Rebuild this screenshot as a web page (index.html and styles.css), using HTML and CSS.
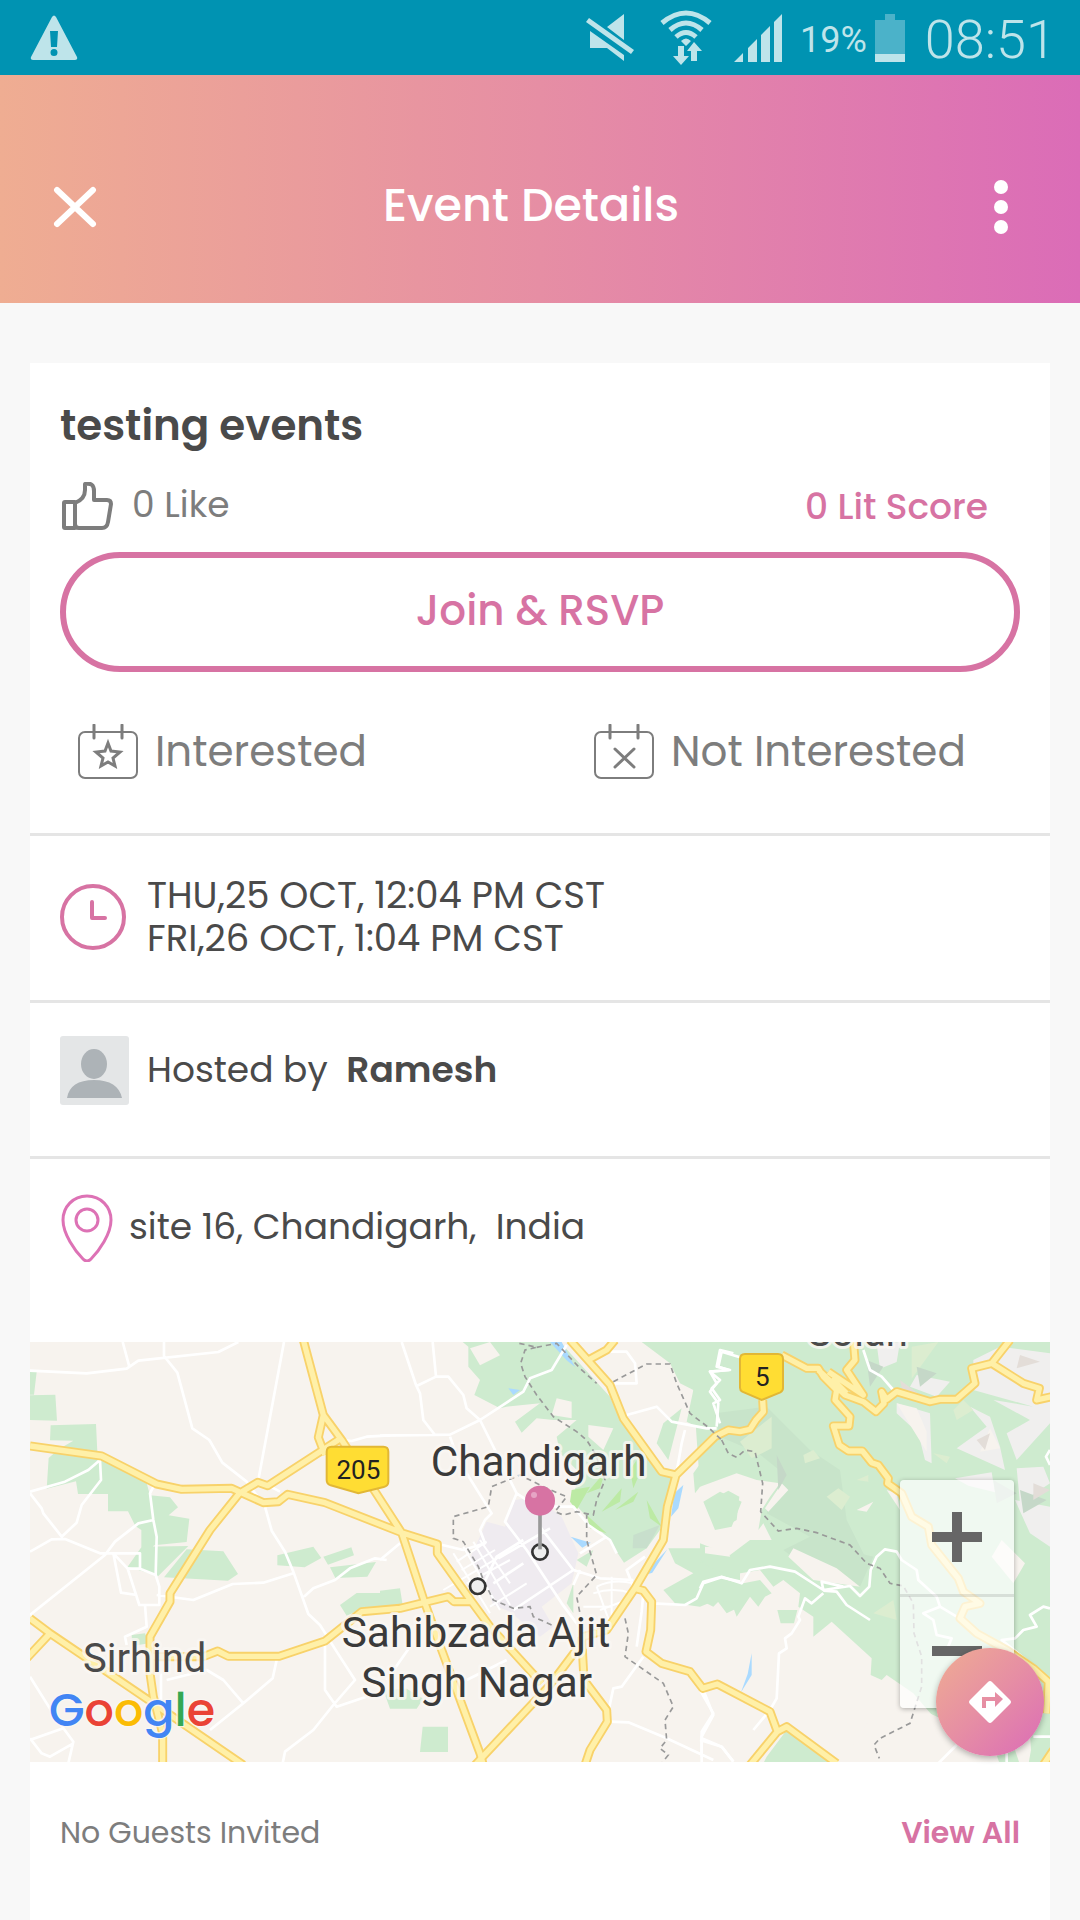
FILE: index.html
```html
<!DOCTYPE html>
<html lang="en">
<head>
<meta charset="utf-8">
<meta name="viewport" content="width=device-width, initial-scale=1">
<title>Event Details</title>
<link rel="stylesheet" href="styles.css">
</head>
<body>
<div class="status">
  <svg class="status-warning" width="48" height="46" viewBox="0 0 48 46" aria-hidden="true">
    <path fill="currentColor" fill-rule="evenodd" d="M22 2q2-3 4 0l21 40q1 3-2 3H3q-3 0-2-3zM20 16l1 16h6l1-16zM24 34a3.500 3.500 0 1 0 0 7a3.500 3.500 0 1 0 0-7z"/>
  </svg>
  <svg class="status-mute" width="50" height="48" viewBox="0 0 50 48" aria-hidden="true">
    <path fill="currentColor" d="M38 0v26L21 13zM4 17l34 24v6L21 34H4zM3 4l45 32-3 4L0 8z"/>
  </svg>
  <svg class="status-wifi" width="52" height="56" viewBox="0 0 52 56" aria-hidden="true">
    <g fill="none" stroke="currentColor" stroke-width="5"><path d="M2 13q24-20 48 0M10 20q16-14 32 0M16 27q10-9 20 0"/></g>
    <path fill="currentColor" d="M21 31q5-5 10 0l-5 5zM18 36h6v10h5l-8 9-8-9h5zM31 51V41h-4l7-9 8 9h-5v10z"/>
  </svg>
  <svg class="status-signal" width="48" height="48" viewBox="0 0 48 48" aria-hidden="true">
    <path fill="currentColor" d="M0 48L9 39v9zM14 34l9-9v23h-9zM27 21l9-9v36h-9zM40 8l8-8v48h-8z"/>
  </svg>
  <span class="status-percent">19%</span>
  <svg class="status-battery" width="30" height="48" viewBox="0 0 30 48" aria-hidden="true">
    <path fill="#4bb2c9" d="M10 0h10v6h10v34H0V6h10z"/><path fill="currentColor" d="M0 40h30v8H0z"/>
  </svg>
  <span class="status-time">08:51</span>
</div>

<header class="header">
  <button class="header-close" aria-label="Close">
    <svg width="44" height="42" viewBox="0 0 44 42"><path d="M4 4l36 34M40 4L4 38" fill="none" stroke="currentColor" stroke-width="6" stroke-linecap="round"/></svg>
  </button>
  <h1 class="header-title">Event Details</h1>
  <button class="header-menu" aria-label="More options">
    <svg width="14" height="56" viewBox="0 0 14 56"><g fill="currentColor"><circle cx="7" cy="8" r="7"/><circle cx="7" cy="28" r="7"/><circle cx="7" cy="48" r="7"/></g></svg>
  </button>
</header>

<main class="card">
  <section class="summary">
    <h2 class="summary-title">testing events</h2>
    <div class="summary-stats">
      <button class="like">
        <svg width="54" height="48" viewBox="-1 -1 54 48" fill="none" stroke="currentColor" stroke-width="4" stroke-linejoin="round" aria-hidden="true"><path d="M4 19h10v26H4q-1 0-1-1V20q0-1 1-1zM14 20q10-4 10-13V1q9-2 9 7v9h13q4 0 4 4l-3 18q-1 6-6 6H18q-4 0-4-4z"/></svg>
        <span>0 Like</span>
      </button>
      <span class="score">0 Lit Score</span>
    </div>
    <button class="join">Join &amp; RSVP</button>
    <div class="choices">
      <button class="choice">
        <svg width="62" height="56" viewBox="0 0 62 56" fill="none" stroke="currentColor" stroke-width="2" aria-hidden="true"><rect x="2" y="8" width="58" height="46" rx="6"/><path d="M17 1v13M45 1v13" stroke-width="3" stroke-linecap="round"/><path d="M31 19l3 8 9 1-7 6 2 8-7-4-7 4 2-8-7-6 9-1z" stroke-width="3"/></svg>
        <span>Interested</span>
      </button>
      <button class="choice">
        <svg width="62" height="56" viewBox="0 0 62 56" fill="none" stroke="currentColor" stroke-width="2" aria-hidden="true"><rect x="2" y="8" width="58" height="46" rx="6"/><path d="M17 1v13M45 1v13" stroke-width="3" stroke-linecap="round"/><path d="M22 25l19 18M41 25L22 43" stroke-width="3" stroke-linecap="round"/></svg>
        <span>Not Interested</span>
      </button>
    </div>
  </section>

  <section class="row row-time">
    <svg class="pink" width="66" height="66" viewBox="0 0 66 66" fill="none" stroke="currentColor" stroke-width="4" aria-hidden="true"><circle cx="33" cy="33" r="31"/><path d="M32 18v16h13" stroke-linecap="round" stroke-linejoin="round"/></svg>
    <p class="row-text">THU,25 OCT, 12:04 PM CST<br>FRI,26 OCT, 1:04 PM CST</p>
  </section>

  <section class="row row-host">
    <svg width="69" height="69" viewBox="0 0 69 69" aria-hidden="true"><rect width="69" height="69" rx="3" fill="#e4e6e7"/><g fill="#adb3b7"><ellipse cx="34" cy="28" rx="13" ry="15"/><path d="M7 62q3-18 27-18t28 18z"/></g></svg>
    <p class="row-text">Hosted by <strong class="host-name">Ramesh</strong></p>
  </section>

  <section class="row row-place">
    <svg class="magenta" width="54" height="68" viewBox="0 0 54 68" fill="none" stroke="currentColor" stroke-width="3" aria-hidden="true"><path d="M27 2C13 2 3 13 3 26c0 14 12 31 20 39q4 4 8 0c8-8 20-25 20-39C51 13 41 2 27 2z"/><circle cx="27" cy="26" r="11"/></svg>
    <p class="row-text">site 16, Chandigarh,&nbsp; India</p>
  </section>

  <section class="map" aria-label="Map of Chandigarh">
    <svg class="map-canvas" viewBox="0 6 3060 1260" preserveAspectRatio="xMidYMid slice">
      <defs>
        <g id="highways">
          <path d="M0 318L215 348 380 432 455 448 605 445 700 488 745 485 773 463 885 488 1115 578 1222 612V640L1325 785 1380 860 1535 1030M0 835L60 880 370 1090 640 1275M60 880L-10 955M398 1275V1180L370 1070 360 1000V890L420 785V760L540 570 628 460 683 427 713 437 928 298M820 0L880 225 935 300 1115 578 1185 790 1235 930 1350 1240 1360 1275M880 225L865 292 885 345M370 950H520L563 933 595 949H748L885 903 995 815 1110 805 1255 770 1272 785H1325"/>
          <g transform="translate(1050 0)"><path d="M285 1275L510 1035 600 915 610 890 680 870 765 745 850 600 862 500 888 405 1005 290 1045 270 1080 275 1110 268 1128 240 1150 215 1148 180M570 0L690 135 730 235 845 395 888 405M625 60L680 30 705 0M765 745L790 752 815 785 812 870 798 935 845 970 930 995 968 1045 1012 1032 1170 1115 1192 1175 1220 1160 1370 1270M1192 1175L1110 1275M605 890L612 1020 680 1110 682 1145 630 1230 615 1275"/></g>
          <g transform="translate(2010 0)"><path d="M245 45L320 85 355 85 370 110 410 150 405 180 450 230 447 258H400L418 315 445 333H487L515 368 535 375 565 415 563 430 605 460 635 530 685 560 695 615 775 715 790 755 840 790 795 800 780 835 830 880 920 930 1000 985 1045 1025 1040 1120M355 90L435 165 490 185 528 215 552 190 545 155 560 178 590 155 690 185 720 178H770L825 130 815 85 875 70 930 0M875 70L970 130 1018 145 1010 180 1055 170M385 95L490 165 440 90 465 60 460 0M395 115L440 160M1060 1230L1030 1275"/></g>
        </g>
      </defs>

      <rect y="6" width="3060" height="1260" fill="#f7f3ee"/>

      <!-- woodland, west -->
      <g fill="#ceebcf">
        <path d="M0 96h20l-8 68H0zM0 166l76-2 5 78-81-2zM62 256l136-4 4 84 92 66 54 20 12 44 60 6 24 30-28 24 62 10-8 70-98 10-38 50 0-96-18-12-22-44h-60v-52h-90l-6-38-88 22 6-92 30-26 44-26-70-1zM335 620l140-2-90 90-92-28zM470 628l110 6 44 68-30 20-192-10zM742 646l108-26 24 34-50 28-82-6zM880 650l84-28 8 24-78 28zM900 682l138-16-26 44-96 4zM930 795l50-36h130v50h-120l-40 18zM305 885l40-5 12 30-50 8z"/>
      </g>
      <!-- woodland, city belt -->
      <g transform="translate(1050 0)">
        <g fill="#ceebcf">
          <path d="M248 6H540L690 170 720 240 830 390 885 410 860 500 840 570 800 625 732 668 680 590 610 520 575 480 600 400 540 340 530 290 590 240 520 240 470 235 425 278 405 245 480 190 380 200 360 205 283 165 300 120 265 80V20zM785 6H1080V280L1030 350 945 460 940 400 990 330 970 270 920 245 940 150 900 130 870 70zM905 205L865 360 830 310 850 250zM975 490L1045 452 1078 470 1070 540 1035 560 1000 550zM865 625H960L1080 665V800L1040 820 1010 780 960 800 885 790 850 750 940 700 885 670zM0 752L60 745 68 795H0zM10 1050l70-4 50 30-20 30H30zM128 1160h76v76h-84zM330 740l30-10 10 30-30 10zM560 790l20-60v90zM590 660l50-30-20 50z"/>
        </g>
        <g fill="#f7f3ee"><path d="M530 175l45 10v50l-60-10zM625 255l75 10-30 65-45-40zM430 340l90-10-60 10zM270 25l60-19 30 40-60 30z"/></g>
        <g fill="#bceaa4"><path d="M575 450l-5 35 20 25 40-70zM620 460l55-65-15 50zM665 515l60-70-5 40zM705 510l70-55-15 30zM750 390l20-30 5 50-15 35zM383 550l52-54 25 5-50 45zM620 525l60 55-50-15zM800 480l45 80-35-25z"/></g>
        <path fill="#efebf0" d="M320 545l55 15 30-80 60-10 80 60 50 110-20 90-90 70 35 60-40 30-90-75-50-20-30-80-40-60z"/>
        <path fill="#c8dfcc" d="M760 585l80-30-40 70h-42z"/>
        <g fill="#aadaff"><path d="M385 145l35 5-20 15zM572 590l60 18-25 15zM510 6h35l40 75-25-20zM910 435l-15 70-22 25 10-70zM862 628l-45 70-30 10z"/></g>
      </g>
      <!-- hills, east -->
      <g transform="translate(2010 0)">
        <g fill="#ceebcf">
          <path d="M-30 6H1050V1270H990L900 1230 700 1130 640 1060 560 1005 545 1020 512 1005 515 955 395 845 340 890V830L295 800 300 760 250 720 220 740 180 690 90 705 0 660V610L90 645 150 600 215 600 190 550 175 570 185 510 210 470 240 430 170 420 110 400 0 440zM10 485L60 455 125 485 95 560 45 570zM0 665L130 730 180 720 215 760 195 770 175 800 150 770 110 830 95 790 60 780 40 800 0 780zM232 810h60l-10 40h-40zM200 1250l60-80 50 30 80 70H190z"/>
        </g>
        <path fill="#f7f3ee" d="M700 1125L900 1215 1000 1190 985 1275H420L560 1060z"/>
        <g fill="#ceebcf"><path d="M880 1215h60l20 60h-60zM985 1080l65 30v160h-55z"/></g>
        <g fill="#c8e4ca"><path d="M45 220L200 200 330 330 420 390 440 540 500 660 480 740 340 700 250 630 330 590 200 520 250 400 175 340 60 290zM440 630l80 20-40 90z"/></g>
        <g fill="#f0efee">
          <path d="M590 190l100 30 5 150-20-10-20-80-65-60zM810 200l60 30 30 90 15 70-145-65 90-65zM650 105l100 20-40 45-80-30zM950 385l80-5 20 50-90 60zM820 60L900 20 1050 40V250L950 360 920 280 990 240 880 180 1000 200 820 150zM530 12l70-6-10 60-50 20zM765 415l110-18 10 60-80-20zM945 480l105 20v120l-60-40z"/>
        </g>
        <g fill="#f7f3ee"><path d="M245 430l20 20-60 65-10-10zM280 625l130 60 70 55-140-20-75-70zM15 620l70 5 5 25-75-10zM470 510l50-25-20 30zM905 600l70 70-35 60-65-80zM590 190l60 15 30 70 0 60zM870 265l30 60-60 10zM560 450l30 10 10 50z"/></g>
        <g fill="#dcedd0"><path d="M215 230v95l-60 30-35-50zM380 470l35-25 35 25-25 40zM635 20l80-14-80 110zM310 345l30-15 20 25-45 15zM760 210l30-30 30 30-50 30zM700 340l50 10-10 20zM520 820l60-40 10 60zM470 420l35-15v20z"/></g>
        <g fill="#c5d8c8"><path d="M230 345l30 60-25 45zM500 60l50 20-40 60zM650 80l60 20-50 40zM880 420l70 40-60 30zM960 450l80 30-70 40z"/></g>
        <g fill="#e3ddd8"><path d="M960 45l60 20-70 20zM830 300l40-20-15 50zM1000 430l50 20-50 30zM600 120l60 45h-50z"/></g>
        <path fill="#aadaff" d="M155 940v65l-32 52 20-55z"/>
      </g>

      <!-- local roads -->
      <g fill="none" stroke="#fff" stroke-width="8" stroke-linejoin="round">
        <path d="M0 92L170 100 290 86 325 62 565 36 625 6M278 6L298 80M402 6V48L442 98 487 265 538 300 577 368 650 425 705 500 725 572 765 635 790 695 835 822 870 855 920 935 975 1020 910 1095 850 1170 765 1235 757 1275M762 6L685 420 750 455M0 455L105 425 175 390 210 360 213 420 155 495 140 548 95 590 40 520 35 505 0 460M0 635L65 598 105 597 210 640H330V686H293L250 640M0 825L225 645 255 605 325 550 370 540 380 590 377 705 330 686M370 440L360 460 370 540M250 640L273 758 320 765M293 686L328 795H388V740L377 705M388 795H345L350 860 285 890 290 915M380 765L490 780 608 732 700 728 790 700M822 770L850 745 915 720 960 685 1035 655 1070 660M940 300L965 303 1010 290 1080 286M0 1010L75 1130 130 1205 115 1270M0 1200L100 1165M130 1210L60 1250 35 1240 0 1195M393 960V1080M410 1020L530 990 580 1020 640 1090 540 1170M640 1090L728 1015 740 960M885 910V1050L920 1100 1040 1060"/>
        <g transform="translate(1050 0)">
          <path d="M0 287L210 284 300 240 430 155 450 115 515 90 560 15M65 6L108 135 120 160 130 240 165 285M158 6L168 110 110 138M168 110L205 110 250 165 260 205 300 240 410 460 375 545 440 630 545 790 605 870M210 290L235 360 335 520 315 540 300 570 315 610 250 630 175 612M480 560L580 690 660 715 760 720M355 655L510 565M300 755L350 650 430 600M400 810L580 690M340 730L430 670M410 460L470 500 580 500 625 555 690 600 710 640M600 640L680 590M600 690L580 735M740 225L830 200 875 245 980 265 1010 265M915 270L905 310 890 395M700 130L770 130 765 70 740 35 690 35M760 740L740 690 795 650M820 790L915 795 950 775 970 730 1025 712 1080 725M790 760L785 815 770 920M690 1145L745 1147 860 1195 1000 1260M968 1045L1000 1125 965 1190V1270M965 1195L1025 1220 1060 1265M790 950L725 1040 700 1045 685 1115M0 660L60 610M1060 40L1020 30 1010 80 1050 90 990 95 1010 130 990 155 1015 190 1010 260M260 1020L380 960M20 1020L90 920"/>
        </g>
        <g transform="translate(2010 0)">
          <path d="M0 745L10 725 65 710 125 730 150 690 210 680 285 695 370 750 450 738 480 768 508 740 512 690 530 650 555 628 590 635 605 660 650 690 655 720 710 770 720 800 670 820 700 840 710 885 755 895 740 930M720 800L770 830M370 750L365 725 430 740M370 752L410 755 440 795 510 840M370 760L335 790 315 775 295 830 300 840 275 880 255 895 260 925 237 940 230 1075 210 1110 160 1170M0 1050L40 1120 5 1175V1250M0 1200L65 1220 100 1265M490 30L510 90 545 110 580 150M1050 805L1030 800 990 825 1010 860 970 870 945 895 905 900 1010 985M1050 330L1038 350 1050 375M1000 1190H1050M710 1275L770 1215M920 1210V1270M65 35L130 55M65 35L55 80 85 90 30 95 60 120 35 145 60 180 40 190 60 250"/>
        </g>
      </g>
      <!-- sector grids -->
      <g fill="none" stroke="#fff" stroke-width="6">
        <path d="M1270 640l110 180M1300 620l110 190M1330 605l110 190M1350 600l90 130M1280 665l90-60M1295 690l100-60M1240 750l170-100M1310 730l130-70M1380 800l110-70M1700 740q50-25 110-10M1690 760q60-20 115 0M1660 800h85M1700 740l40 110M1745 710v130M1710 810l80-30"/>
      </g>

      <use href="#highways" class="highway-edge"/>
      <use href="#highways" class="highway-fill"/>

      <!-- state borders -->
      <g fill="none" stroke="#999" stroke-width="5" stroke-dasharray="16 12">
        <g transform="translate(1050 0)"><path d="M418 10L470 22 435 30 422 70 435 110 470 165 520 230 590 275 620 300 645 340 675 420 650 480 640 525 590 515 550 525 525 515 560 470 530 458 490 440 420 405 335 440 325 500 220 530V595L250 605 295 680 310 720 340 780 400 805 450 800 460 830 515 855M470 22L530 10 600 85 650 130M700 125L800 72H870L890 130 930 220 985 262 1025 300M620 520V600L650 705 590 770 600 820M735 835L745 880 735 950 850 1030 880 1100 855 1140 860 1200 840 1225 865 1245 845 1270"/></g>
        <g transform="translate(2010 0)"><path d="M65 300L85 340 110 352 135 330 165 335 188 430 182 515 235 573 290 565 350 578 450 615 500 670 540 685 570 730 610 738 640 790 642 880 665 950V1040L630 1150 540 1195 522 1215 538 1255"/></g>
      </g>

      <!-- route shields -->
      <g fill="#fd3" stroke="#e2b735" stroke-width="6">
        <path d="M905 320H1060q15 0 15 15V425q0 12-14 16L985 460 902 436q-12-4-12-16V335q0-15 15-15z"/>
        <path d="M2145 42H2244q15 0 15 15V145q0 8-8 12L2195 180 2137 155q-7-4-7-12V57q0-15 15-15z"/>
      </g>
      <g class="shield-text"><text x="985" y="416">205</text><text x="2197" y="138">5</text></g>

      <g fill="#eee" stroke="#333" stroke-width="8"><circle cx="1530" cy="636" r="23"/><circle cx="1343" cy="739" r="23"/></g>
      <path d="M1530 515V628" stroke="#999" stroke-width="11"/>
      <circle cx="1530" cy="482" r="45" fill="#d773a3"/><circle cx="1512" cy="465" r="9" fill="#e6a5c5"/>

      <g class="place">
        <text x="1526" y="407">Chandigarh</text>
        <text x="1338" y="920">Sahibzada Ajit</text>
        <text x="1340" y="1070">Singh Nagar</text>
        <text class="place-minor" x="344" y="996">Sirhind</text>
        <text class="place-minor" x="2483" y="17">Solan</text>
      </g>
      <text class="google" x="57" y="1157"><tspan fill="#4285f4">G</tspan><tspan fill="#ea4335">o</tspan><tspan fill="#fbbc05">o</tspan><tspan fill="#4285f4">g</tspan><tspan fill="#34a853">l</tspan><tspan fill="#ea4335">e</tspan></text>
    </svg>
    <div class="zoom">
      <button class="zoom-button" aria-label="Zoom in"><svg width="50" height="50" viewBox="0 0 50 50"><path fill="#666" d="M20 0h10v20h20v10H30v20H20V30H0V20h20z"/></svg></button>
      <button class="zoom-button" aria-label="Zoom out"><svg width="50" height="50" viewBox="0 0 50 50"><path fill="#666" d="M0 18h50v10H0z"/></svg></button>
    </div>
    <button class="directions" aria-label="Directions">
      <svg width="42" height="42" viewBox="0 0 42 42"><path fill="#fff" fill-rule="evenodd" d="M19 1q2-2 4 0l18 18q2 2 0 4L23 41q-2 2-4 0L1 23q-2-2 0-4zM13 27h4v-7h9v6l8-8-8-7v5H13z"/></svg>
    </button>
  </section>

  <section class="guests">
    <span>No Guests Invited</span>
    <a class="guests-link" href="#guests">View All</a>
  </section>
</main>
</body>
</html>
```
FILE: styles.css
```css
* {
  box-sizing: border-box;
}

body {
  display: flex;
  flex-direction: column;
  min-height: 100vh;
  margin: 0;
  background: #f8f8f8;
  color: #4a4a4a;
  font-family: Poppins, Inter, "Open Sans", sans-serif;
  font-size: 36px;
}

h1,
h2,
p {
  margin: 0;
}

button {
  padding: 0;
  border: 0;
  background: none;
  color: inherit;
  font: inherit;
  cursor: pointer;
}

svg {
  display: block;
  flex: none;
}

/* Status bar */
.status {
  display: flex;
  align-items: center;
  height: 75px;
  padding: 0 24px 0 30px;
  background: #0093b2;
  color: #bee4ea;
  font-family: Roboto, sans-serif;
}

.status-mute {
  margin-left: auto;
}

.status-wifi {
  margin-left: 24px;
}

.status-signal {
  margin-left: 22px;
}

.status-percent {
  margin: 0 8px 0 18px;
  padding-top: 4px;
  font-size: 36px;
}

.status-time {
  margin-left: 20px;
  padding-top: 4px;
  font-size: 54px;
  font-weight: 300;
}

/* Header */
.header {
  display: flex;
  align-items: center;
  justify-content: space-between;
  height: 228px;
  padding: 36px 41px 0 45px;
  background: linear-gradient(90deg, #efad92, #e68ea4 50%, #db6cb7);
  color: #fff;
}

.header-close,
.header-menu {
  display: grid;
  place-items: center;
  width: 60px;
  height: 60px;
}

.header-menu {
  width: 76px;
}

.header-title {
  padding-right: 6px;
  padding-bottom: 4px;
  font-size: 46px;
  font-weight: 500;
}

/* Card */
.card {
  flex: 1;
  margin: 60px 30px 0;
  background: #fff;
}

.summary {
  padding: 33px 30px 53px;
}

.summary-title {
  font-size: 42px;
  font-weight: 600;
  line-height: 60px;
}

.summary-stats {
  display: flex;
  align-items: center;
  justify-content: space-between;
  height: 48px;
  margin-top: 26px;
  padding-right: 32px;
}

.like {
  display: flex;
  align-items: center;
  gap: 18px;
  color: #7d7d7d;
  line-height: 48px;
}

.like span {
  padding-bottom: 2px;
}

.score {
  color: #d773a3;
  font-weight: 500;
}

.join {
  width: 100%;
  height: 120px;
  margin-top: 22px;
  padding-bottom: 4px;
  border: 6px solid #d773a3;
  border-radius: 60px;
  color: #d773a3;
  font-size: 42px;
  font-weight: 500;
}

.choices {
  display: grid;
  grid-template-columns: 1fr 1fr;
  gap: 72px;
  margin-top: 52px;
}

.choice {
  display: flex;
  align-items: center;
  gap: 16px;
  padding-left: 17px;
  color: #7d7d7d;
  font-size: 42px;
  line-height: 56px;
  white-space: nowrap;
}

.row {
  display: flex;
  align-items: center;
  border-top: 3px solid #e5e5e5;
}

.row-text {
  line-height: 43px;
}

.row-time {
  gap: 21px;
  padding: 38px 30px 40px;
  font-size: 37px;
}

.row-host {
  gap: 18px;
  padding: 33px 30px 51px;
}

.row-place {
  gap: 15px;
  padding: 35px 30px 80px;
}

.row-host .row-text,
.row-place .row-text {
  padding-bottom: 3px;
}

.host-name {
  margin-left: 9px;
  font-weight: 600;
}

.pink {
  color: #d773a3;
}

.magenta {
  color: #dd72b5;
}

/* Map */
.map {
  position: relative;
  height: 420px;
}

.map-canvas {
  width: 100%;
  height: 100%;
}

.highway-edge,
.highway-fill {
  fill: none;
  stroke: #f8d26a;
  stroke-width: 27;
  stroke-linejoin: round;
}

.highway-fill {
  stroke: #fff0a8;
  stroke-width: 16;
}

.map text {
  font-family: Roboto, sans-serif;
}

.shield-text {
  fill: #222;
  font-size: 78px;
  text-anchor: middle;
}

.place {
  fill: #3a3a3a;
  stroke: #faf7f4;
  stroke-opacity: 0.8;
  stroke-width: 18;
  stroke-linejoin: round;
  paint-order: stroke;
  font-size: 127px;
  text-anchor: middle;
}

.place-minor {
  fill: #4a4a4a;
  font-size: 120px;
}

.map .google {
  stroke: #faf7f4;
  stroke-opacity: 0.8;
  stroke-width: 8;
  paint-order: stroke;
  font-family: Poppins, Inter, sans-serif;
  font-size: 138px;
  font-weight: 500;
}

.zoom {
  position: absolute;
  right: 36px;
  bottom: 54px;
  border-radius: 4px;
  background: rgba(255, 255, 255, 0.7);
  box-shadow: 0 1px 5px rgba(0, 0, 0, 0.3);
}

.zoom-button {
  display: grid;
  place-items: center;
  width: 114px;
  height: 114px;
}

.zoom-button + .zoom-button {
  border-top: 3px solid rgba(0, 0, 0, 0.1);
}

.directions {
  position: absolute;
  right: 6px;
  bottom: 6px;
  display: grid;
  place-items: center;
  width: 108px;
  height: 108px;
  border-radius: 50%;
  background: linear-gradient(135deg, #efad92, #e68ea4 50%, #db6cb7);
  box-shadow: 0 2px 6px rgba(0, 0, 0, 0.3);
}

/* Guests */
.guests {
  display: flex;
  justify-content: space-between;
  padding: 51px 30px;
  color: #7d7d7d;
  font-size: 30px;
  line-height: 40px;
}

.guests-link {
  color: #d773a3;
  font-weight: 600;
  text-decoration: none;
}
```
